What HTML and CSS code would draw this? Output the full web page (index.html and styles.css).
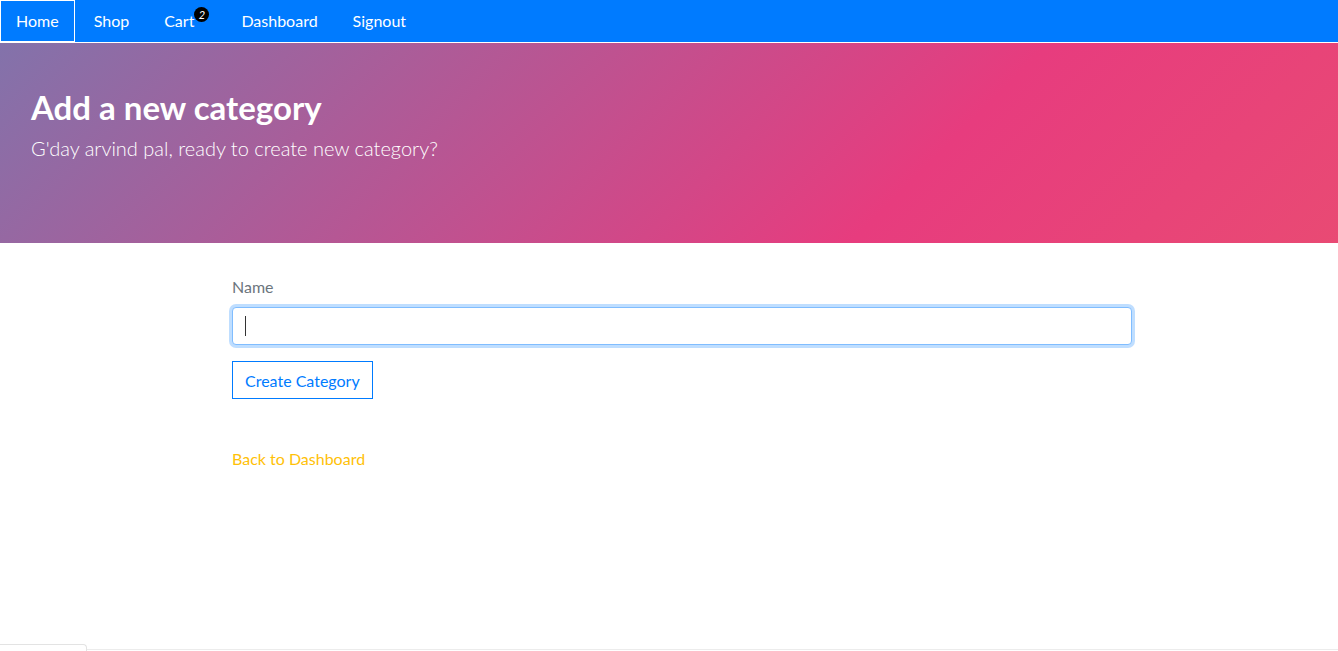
FILE: index.html
```html
<!DOCTYPE html>
<html lang="en">
<head>
<meta charset="utf-8">
<title>Add a new category</title>
<link rel="stylesheet" href="styles.css">
</head>
<body>
<div class="page">
  <nav class="topnav">
    <ul class="nav-list">
      <li><a class="nav-link active" href="#">Home</a></li>
      <li><a class="nav-link" href="#">Shop</a></li>
      <li><a class="nav-link" href="#">Cart<span class="badge">2</span></a></li>
      <li><a class="nav-link" href="#">Dashboard</a></li>
      <li><a class="nav-link" href="#">Signout</a></li>
    </ul>
  </nav>
  <header class="hero">
    <h2 class="hero-title">Add a new category</h2>
    <p class="hero-lead">G'day arvind pal, ready to create new category?</p>
  </header>
  <main class="content">
    <form class="cat-form">
      <div class="form-group">
        <label class="form-label" for="name">Name</label>
        <div class="input-wrap"><input class="form-input" id="name" type="text"><span class="caret"></span></div>
      </div>
      <button class="btn-outline" type="button">Create Category</button>
    </form>
    <div class="back">
      <a class="back-link" href="#">Back to Dashboard</a>
    </div>
  </main>
  <footer class="bottom-bar">
    <div class="bottom-tab"></div>
    <div class="bottom-line"></div>
  </footer>
</div>
</body>
</html>
```

FILE: styles.css
```css
* { box-sizing: border-box; }
html, body { margin: 0; padding: 0; }
body {
  font-family: "Lato", "Noto Sans", sans-serif;
  font-size: 16px;
  color: #212529;
  background: #fff;
}
.page {
  min-height: 651px;
  display: flex;
  flex-direction: column;
}
.topnav {
  background: #007bff;
  height: 42px;
  border-bottom: 1px solid #fff;
  box-sizing: content-box;
}
.nav-list {
  list-style: none;
  margin: 0;
  padding: 0;
  display: flex;
  height: 42px;
}
.nav-link {
  display: flex;
  align-items: center;
  height: 42px;
  padding: 0 16px 2px;
  margin-right: 1px;
  border: 1px solid transparent;
  color: #fff;
  text-decoration: none;
  font-size: 16px;
}
.nav-link.active { border-color: #fff; padding: 0 15px 2px; margin-right: 2px; }
.badge {
  display: inline-flex;
  align-items: center;
  justify-content: center;
  width: 15px;
  height: 15px;
  border-radius: 50%;
  background: #000;
  color: #fff;
  font-size: 11px;
  font-style: italic;
  margin-top: -11px;
  margin-left: 0;
  margin-right: -3px;
}
.hero {
  height: 200px;
  padding: 44px 31px 0;
  background: linear-gradient(-45deg, #ee7752 -1105px, #e73c7e 345px, #23a6d5 1795px);
  color: #fff;
}
.hero-title {
  margin: 0;
  font-size: 33px;
  font-weight: 700;
  line-height: 40px;
}
.hero-lead {
  margin: 9px 0 0;
  font-size: 20px;
  font-weight: 300;
  line-height: 24px;
}
.content {
  flex: 1;
  padding: 32px 0 0 232px;
}
.cat-form { width: 900px; }
.form-group { margin-bottom: 16px; }
.form-label {
  display: block;
  color: #6c757d;
  font-size: 16px;
  line-height: 24px;
  margin-bottom: 8px;
}
.input-wrap { position: relative; }
.form-input {
  display: block;
  width: 100%;
  height: 38px;
  border: 1px solid #80bdff;
  border-radius: 4px;
  box-shadow: 0 0 0 3px rgba(0,123,255,.25);
  outline: none;
  padding: 6px 12px;
  font-size: 16px;
  font-family: inherit;
}
.caret {
  position: absolute;
  left: 13px;
  top: 9px;
  width: 1px;
  height: 20px;
  background: #333;
}
.btn-outline {
  display: block;
  height: 38px;
  padding: 0 12px;
  border: 1px solid #007bff;
  border-radius: 0;
  background: #fff;
  color: #007bff;
  font-size: 16px;
  font-family: inherit;
}
.back { margin-top: 48px; }
.back-link {
  color: #ffc107;
  text-decoration: none;
  font-size: 16px;
  line-height: 24px;
}
.bottom-bar {
  display: flex;
  align-items: flex-end;
  height: 7px;
}
.bottom-tab {
  width: 87px;
  height: 7px;
  border-top: 1px solid #e3e3e3;
  border-right: 1px solid #e3e3e3;
  border-top-right-radius: 4px;
}
.bottom-line {
  flex: 1;
  height: 2px;
  border-top: 1px solid #ececec;
}
```
